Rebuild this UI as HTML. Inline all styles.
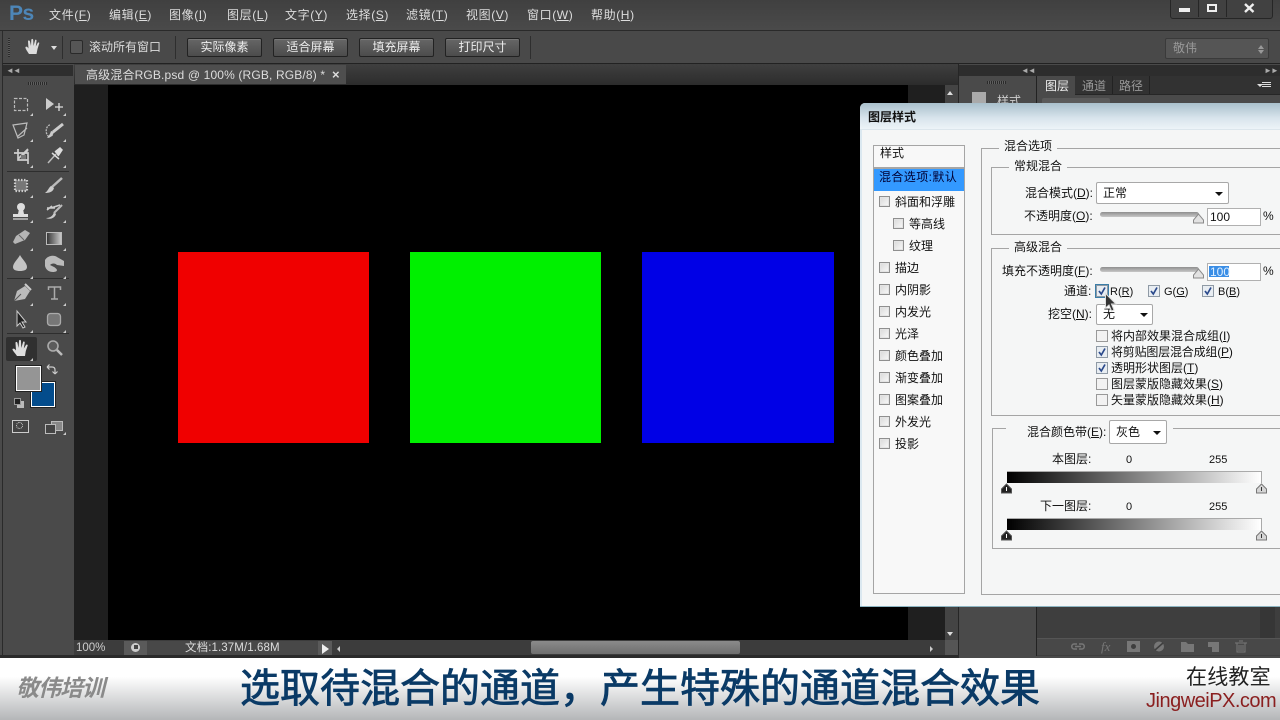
<!DOCTYPE html>
<html><head><meta charset="utf-8"><style>
html,body{margin:0;padding:0;background:#000}
#r{position:relative;width:1280px;height:720px;overflow:hidden;background:#434343;font-family:"Liberation Sans","WenQuanYi Zen Hei","Noto Sans CJK SC",sans-serif;font-size:12px;color:#ddd}
.a{position:absolute}
.t{position:absolute;white-space:nowrap;line-height:14px}
.m{letter-spacing:.6px}
u{text-decoration:underline}
.d{color:#111}
.btn{position:absolute;top:38px;height:17px;line-height:17px;text-align:center;border:1px solid #222;border-radius:2px;background:linear-gradient(#666,#4c4c4c);color:#eee;box-shadow:inset 0 1px 0 #777}
.cb{position:absolute;width:9px;height:9px;border:1px solid #8f8f8f;background:linear-gradient(135deg,#d8d8d8,#fafafa);box-shadow:inset 0 0 0 1px #e4e4e4}
.gb{position:absolute;border:1px solid #a5a5a5}
.lg{position:absolute;background:#f5f6f6;padding:0 5px;color:#111;line-height:14px;white-space:nowrap}
.sel{position:absolute;background:#fff;border:1px solid #a8a8a8;border-radius:2px;color:#111}
.grad{position:absolute;left:1007px;width:254px;height:11px;background:linear-gradient(90deg,#000,#fff);border:1px solid #aaa;border-left:0;border-bottom:0}
.tri{position:absolute;width:0;height:0;border-left:4px solid transparent;border-right:4px solid transparent;border-top:4px solid #111}
svg{position:absolute;overflow:visible}
</style></head><body><div id="r">

<!-- menu bar -->
<div class="a" style="left:0;top:0;width:1280px;height:30px;background:linear-gradient(#404040,#4a4a4a)"></div>
<div class="a" style="left:0;top:30px;width:1280px;height:1px;background:#2a2a2a"></div>
<div class="t" style="left:9px;top:2px;font-size:21px;line-height:24px;font-weight:bold;color:#4d86b8;letter-spacing:-.5px">Ps</div>
<div class="t m" style="left:49px;top:8px">文件(<u>F</u>)</div>
<div class="t m" style="left:109px;top:8px">编辑(<u>E</u>)</div>
<div class="t m" style="left:169px;top:8px">图像(<u>I</u>)</div>
<div class="t m" style="left:227px;top:8px">图层(<u>L</u>)</div>
<div class="t m" style="left:285px;top:8px">文字(<u>Y</u>)</div>
<div class="t m" style="left:346px;top:8px">选择(<u>S</u>)</div>
<div class="t m" style="left:406px;top:8px">滤镜(<u>T</u>)</div>
<div class="t m" style="left:466px;top:8px">视图(<u>V</u>)</div>
<div class="t m" style="left:527px;top:8px">窗口(<u>W</u>)</div>
<div class="t m" style="left:591px;top:8px">帮助(<u>H</u>)</div>
<!-- window controls -->
<div class="a" style="left:1170px;top:-2px;width:101px;height:19px;background:#414141;border:1px solid #262626;border-radius:0 0 3px 3px"></div>
<div class="a" style="left:1198px;top:0;width:1px;height:17px;background:#262626"></div>
<div class="a" style="left:1226px;top:0;width:1px;height:17px;background:#262626"></div>
<div class="a" style="left:1179px;top:8px;width:11px;height:4px;background:#eee"></div>
<div class="a" style="left:1207px;top:4px;width:6px;height:4px;border:2px solid #eee"></div>
<svg style="left:1244px;top:3px" width="11" height="10"><path d="M1 1L9.500 9M9.500 1L1 9" stroke="#eee" stroke-width="2.400" fill="none"/></svg>

<!-- options bar -->
<div class="a" style="left:0;top:31px;width:1280px;height:33px;background:#494949"></div>
<div class="a" style="left:2px;top:31px;width:1278px;height:32px;border-left:1px solid #2c2c2c;border-bottom:1px solid #222"></div>
<div class="a" style="left:8px;top:38px;width:2px;height:19px;background:repeating-linear-gradient(#2b2b2b 0 1px,#5a5a5a 1px 2px)"></div>
<svg style="left:24px;top:38px" width="18" height="18"><path d="M5 16C3 13 1 10 1.500 9C2.500 8 3.500 9 4.500 10.500L4 3.500C4 2 5.500 2 6 3.500L7 8L7.300 2C7.500 .5 9 .5 9.200 2L9.500 8L11 2.500C11.400 1.200 12.700 1.500 12.500 3L11.800 8.500L13.800 4.800C14.600 3.800 15.600 4.500 15.200 5.500L13.500 11L12.500 16Z" fill="#ddd"/></svg>
<div class="tri" style="left:51px;top:46px;border-left-width:3px;border-right-width:3px;border-top-color:#ddd"></div>
<div class="a" style="left:62px;top:36px;width:1px;height:23px;background:#2e2e2e"></div>
<div class="a" style="left:70px;top:40px;width:11px;height:12px;background:#565656;border:1px solid #2a2a2a;border-radius:2px"></div>
<div class="t" style="left:89px;top:40px">滚动所有窗口</div>
<div class="a" style="left:175px;top:36px;width:1px;height:23px;background:#2e2e2e"></div>
<div class="btn" style="left:187px;width:73px">实际像素</div>
<div class="btn" style="left:273px;width:73px">适合屏幕</div>
<div class="btn" style="left:359px;width:73px">填充屏幕</div>
<div class="btn" style="left:445px;width:73px">打印尺寸</div>
<div class="a" style="left:530px;top:36px;width:1px;height:23px;background:#2e2e2e"></div>
<div class="a" style="left:1165px;top:38px;width:102px;height:19px;background:#555;border:1px solid #3a3a3a;border-radius:2px"></div>
<div class="t" style="left:1173px;top:41px;color:#999">敬伟</div>
<div class="tri" style="left:1258px;top:50px;border-left-width:3px;border-right-width:3px;border-top-color:#999"></div>
<div class="tri" style="left:1258px;top:45px;border-left-width:3px;border-right-width:3px;border-top:0;border-bottom:4px solid #999"></div>

<!-- left tool panel -->
<div class="a" style="left:0;top:64px;width:74px;height:592px;background:#4a4a4a"></div>
<div class="a" style="left:2px;top:64px;width:71px;height:591px;border:1px solid #2a2a2a;border-top:0"></div>
<div class="a" style="left:3px;top:65px;width:70px;height:11px;background:#2e2e2e"></div>
<div class="t" style="left:6px;top:64px;font-size:8px;color:#aaa;letter-spacing:-1px">◄◄</div>
<div class="a" style="left:28px;top:82px;width:19px;height:3px;background:repeating-linear-gradient(90deg,#2a2a2a 0 1px,#5e5e5e 1px 2px)"></div>

<svg style="left:0;top:85px" width="74" height="360" fill="none" stroke="#bbb">
<rect x="14.500" y="13.500" width="13" height="12" stroke-dasharray="3 1.500" stroke-width="1.200"/>
<path d="M46 13L46 25L54 19Z" fill="#ccc" stroke="none"/><path d="M59 18V26M55 22H63" stroke="#ddd" stroke-width="1.300"/>
<path d="M13 40L27 38L24 50L18 53ZM17 52L27 43" stroke-width="1.200"/>
<path d="M50 40C46 40 44 50 50 52M48 52L53 50" stroke-dasharray="2 1" stroke-width="1.300"/><path d="M53 47L63 39" stroke="#ccc" stroke-width="3"/><path d="M47 53C50 53 53 51 54 47L51 46C50 49 49 51 47 53Z" fill="#ccc" stroke="none"/>
<path d="M18 64V75H28V68H14M21 72L28 65M28 64L18 74M28 75V79" stroke-width="1.700" stroke="#ccc"/><rect x="21" y="70" width="5" height="4" fill="#777" stroke="none"/>
<path d="M48 78L56 69" stroke-width="1.500"/><path d="M52 68L59 74M55 67L60 63L62 65L58 71" fill="#ddd" stroke="#ddd" stroke-width="1.500"/>
<path d="M7 86.500H69" stroke="#2e2e2e"/>
<rect x="15" y="95" width="12" height="11" fill="#777" stroke="#ccc" stroke-dasharray="1.500 1.500" stroke-width="2.200"/>
<path d="M52 102L62 93" stroke="#bbb" stroke-width="2.500"/><path d="M45 108C49 108 53 107 54 103L51 101C49 102 48 106 45 108Z" fill="#ccc" stroke="none"/>
<circle cx="21" cy="122" r="4" fill="#ddd" stroke="none"/><path d="M19 124H23L24 129H18ZM13 129H28V132H13Z" fill="#ddd" stroke="none"/><path d="M13 134H28" stroke="#ddd" stroke-width="1.200"/>
<path d="M47 123H55M60 120L51 123M47 125L52 121" stroke="#ccc" stroke-width="1.500"/><path d="M46 133C50 133 53 131 54 127L56 129C55 133 50 135 46 133Z" fill="#ccc" stroke="none"/><path d="M54 128L62 120" stroke="#bbb" stroke-width="2"/>
<path d="M13 157L16 151L25 145L30 148L25 155L15 159Z" fill="#b5b5b5" stroke="none"/><path d="M19 150L24 155" stroke="#666"/>
<defs><linearGradient id="g1"><stop offset="0" stop-color="#333"/><stop offset="1" stop-color="#ccc"/></linearGradient></defs>
<rect x="46.500" y="147.500" width="15" height="12" fill="url(#g1)" stroke="#bbb"/>
</svg>

<svg style="left:0;top:250px" width="74" height="200" fill="none" stroke="#bbb">
<path d="M13 17C13 13 18 9 20 5C22 9 27 13 27 17C27 20 24 21 20 21C16 21 13 20 13 17Z" fill="#c4c4c4" stroke="none"/>
<path d="M45 10C48 5 55 5 57 7L64 11V16L57 15C55 13 52 13 50 15L54 17C59 20 57 22 53 22C49 22 46 20 45 16Z" fill="#bbb" stroke="none"/>
<path d="M7 28.500H69" stroke="#2e2e2e"/>
<path d="M14 51L17 41L25 36L30 41L25 49Z" fill="#bbb" stroke="none"/><path d="M14 51L21 44" stroke="#555"/><path d="M25 34L31 40" stroke="#ccc" stroke-width="2"/>
<path d="M48.500 40V37H60.500V40M54.500 37V49M51 49H58" stroke="#aaa" stroke-width="1.500"/>
<path d="M17 61V76L20 73L23 78L25 77L22 72H26Z" fill="#222" stroke="#ccc"/>
<rect x="47.500" y="63.500" width="13" height="12" rx="3" fill="#777" stroke="#aaa" stroke-width="1.300"/>
</svg>
<div class="a" style="left:7px;top:333px;width:62px;height:1px;background:#2e2e2e"></div>
<div class="a" style="left:6px;top:337px;width:31px;height:24px;background:#303030;border-radius:2px"></div>
<svg style="left:11px;top:339px" width="20" height="19"><path d="M6 17C4 14 1 11 1.500 10C2.500 9 4 10 5 11.500L4.500 4C4.500 2.500 6 2.500 6.500 4L7.500 9L8 2C8.200 .5 9.800 .5 10 2L10.300 9L12 3.200C12.400 2 14 2.300 13.700 3.700L12.800 9.500L15 6C15.800 5 17 5.700 16.600 6.800L14.800 12L14 17Z" fill="#ddd"/></svg>
<svg style="left:46px;top:339px" width="18" height="18" fill="none"><circle cx="7" cy="7" r="5" stroke="#aaa" stroke-width="1.600" fill="#5c5c5c"/><path d="M11 11L16 16" stroke="#bbb" stroke-width="2.500"/></svg>
<!-- triangles on tools -->
<svg style="left:0;top:85px" width="74" height="360" fill="#ccc">
<path d="M33 31h-3l3-3zM66 31h-3l3-3zM33 57h-3l3-3zM66 57h-3l3-3zM33 83h-3l3-3zM66 83h-3l3-3zM33 113h-3l3-3zM66 113h-3l3-3zM33 138h-3l3-3zM66 138h-3l3-3zM33 166h-3l3-3zM66 166h-3l3-3zM33 194h-3l3-3zM66 194h-3l3-3zM33 221h-3l3-3zM66 221h-3l3-3zM33 248h-3l3-3zM66 248h-3l3-3zM33 276h-3l3-3zM66 350h-3l3-3z"/>
</svg>
<!-- colour swatches -->
<div class="a" style="left:31px;top:382px;width:22px;height:23px;background:#034c8c;border:1px solid #fff;outline:1px solid #222"></div>
<div class="a" style="left:16px;top:366px;width:23px;height:23px;background:#959595;border:1px solid #fff;outline:1px solid #222"></div>
<svg style="left:46px;top:363px" width="12" height="13" fill="none" stroke="#ccc" stroke-width="1.200"><path d="M1 4H6C8 4 9 5 9 7V11M1 4L3.500 1.500M1 4L3.500 6.500M9 11L6.500 8.500M9 11L11.500 8.500"/></svg>
<div class="a" style="left:17px;top:401px;width:7px;height:7px;background:#bbb"></div>
<div class="a" style="left:14px;top:398px;width:5px;height:5px;background:#222;border:1px solid #999"></div>
<div class="a" style="left:12px;top:420px;width:15px;height:11px;border:1px solid #ccc;background:#444"></div>
<div class="a" style="left:16px;top:422px;width:5px;height:5px;border:1px dotted #ddd;border-radius:50%"></div>
<div class="a" style="left:51px;top:421px;width:10px;height:8px;background:#888;border:1px solid #bbb"></div>
<div class="a" style="left:45px;top:424px;width:9px;height:8px;background:#444;border:1px solid #bbb"></div>

<!-- doc area -->
<div class="a" style="left:74px;top:64px;width:884px;height:21px;background:linear-gradient(#3f3f3f,#2c2c2c)"></div>
<div class="a" style="left:75px;top:65px;width:271px;height:19px;background:#4e4e4e"></div>
<div class="t" style="left:86px;top:68px;color:#ddd;letter-spacing:.15px">高级混合RGB.psd @ 100% (RGB, RGB/8) *</div>
<div class="t" style="left:332px;top:68px;color:#ddd;font-size:13px;font-weight:bold">×</div>
<div class="a" style="left:74px;top:85px;width:34px;height:555px;background:#1f1f1f"></div>
<div class="a" style="left:108px;top:85px;width:800px;height:555px;background:#000"></div>
<div class="a" style="left:908px;top:85px;width:37px;height:555px;background:#1f1f1f"></div>
<div class="a" style="left:945px;top:85px;width:13px;height:555px;background:#444"></div>
<div class="a" style="left:958px;top:64px;width:1px;height:592px;background:#262626"></div>
<div class="tri" style="left:947px;top:91px;border-left-width:3px;border-right-width:3px;border-top:0;border-bottom:4px solid #ddd"></div>
<div class="tri" style="left:947px;top:632px;border-left-width:3px;border-right-width:3px;border-top-color:#ddd"></div>
<div class="a" style="left:178px;top:252px;width:191px;height:191px;background:#f00000"></div>
<div class="a" style="left:410px;top:252px;width:191px;height:191px;background:#00f000"></div>
<div class="a" style="left:642px;top:252px;width:192px;height:191px;background:#0000e6"></div>

<!-- status bar -->
<div class="a" style="left:74px;top:640px;width:884px;height:15px;background:#3c3c3c"></div>
<div class="a" style="left:0;top:655px;width:1280px;height:3px;background:#2a2a2a"></div>
<div class="t" style="left:76px;top:641px;color:#ccc;font-size:11.500px">100%</div>
<div class="a" style="left:124px;top:641px;width:23px;height:14px;background:#5a5a5a"></div>
<div class="a" style="left:131px;top:643px;width:9px;height:9px;border-radius:50%;background:#ccc"></div>
<div class="a" style="left:134px;top:645px;width:4px;height:4px;background:#444"></div>
<div class="a" style="left:147px;top:641px;width:171px;height:14px;background:#484848"></div>
<div class="t" style="left:185px;top:641px;color:#ddd;font-size:11.500px;letter-spacing:.1px">文档:1.37M/1.68M</div>
<div class="a" style="left:318px;top:641px;width:14px;height:14px;background:#5a5a5a"></div>
<div class="a" style="left:322px;top:644px;width:0;height:0;border-top:5px solid transparent;border-bottom:5px solid transparent;border-left:7px solid #eee"></div>
<div class="a" style="left:337px;top:646px;width:0;height:0;border-top:3px solid transparent;border-bottom:3px solid transparent;border-right:3px solid #ccc"></div>
<div class="a" style="left:531px;top:641px;width:209px;height:13px;border-radius:2px;background:linear-gradient(#8a8a8a,#6f6f6f)"></div>
<div class="a" style="left:930px;top:646px;width:0;height:0;border-top:3px solid transparent;border-bottom:3px solid transparent;border-left:3px solid #ccc"></div>
<div class="a" style="left:945px;top:640px;width:13px;height:15px;background:#555"></div>

<!-- right panels -->
<div class="a" style="left:959px;top:64px;width:321px;height:594px;background:#4a4a4a"></div>
<div class="a" style="left:959px;top:65px;width:321px;height:11px;background:#2d2d2d"></div>
<div class="t" style="left:1021px;top:64px;font-size:8px;color:#aaa;letter-spacing:-1px">◄◄</div>
<div class="t" style="left:1264px;top:64px;font-size:8px;color:#aaa;letter-spacing:-1px">►►</div>
<div class="a" style="left:987px;top:81px;width:19px;height:3px;background:repeating-linear-gradient(90deg,#2a2a2a 0 1px,#5e5e5e 1px 2px)"></div>
<div class="a" style="left:1036px;top:76px;width:244px;height:580px;background:#3e3e3e;border-left:1px solid #222"></div>
<div class="a" style="left:1037px;top:76px;width:243px;height:18px;background:#323232"></div>
<div class="a" style="left:1037px;top:94px;width:243px;height:12px;background:#4a4a4a;border-top:1px solid #262626"></div>
<div class="a" style="left:1037px;top:76px;width:38px;height:19px;background:#4a4a4a"></div>
<div class="a" style="left:1112px;top:76px;width:1px;height:18px;background:#222"></div>
<div class="a" style="left:1149px;top:76px;width:1px;height:18px;background:#222"></div>
<div class="t" style="left:1045px;top:79px;color:#eee">图层</div>
<div class="t" style="left:1082px;top:79px;color:#999">通道</div>
<div class="t" style="left:1119px;top:79px;color:#999">路径</div>
<div class="a" style="left:1042px;top:98px;width:68px;height:8px;background:#5a5a5a;border-radius:2px"></div>
<div class="a" style="left:1262px;top:82px;width:9px;height:6px;background:repeating-linear-gradient(#ddd 0 1px,#323232 1px 2px)"></div>
<div class="tri" style="left:1257px;top:84px;border-left-width:3px;border-right-width:3px;border-top:3px solid #ddd"></div>
<div class="a" style="left:972px;top:92px;width:14px;height:11px;background:#aaa"></div>
<div class="t" style="left:997px;top:94px;color:#ccc">样式</div>
<div class="a" style="left:1037px;top:638px;width:243px;height:1px;background:#555"></div>
<div class="a" style="left:1037px;top:639px;width:243px;height:16px;background:#484848"></div>
<div class="a" style="left:1260px;top:607px;width:15px;height:31px;background:#363636"></div>
<svg style="left:1071px;top:640px" width="185" height="14" fill="none" stroke="#777" stroke-width="1.500">
<path d="M6 4H3C0 4 0 9 3 9H6M8 4H11C14 4 14 9 11 9H8M4 6.500H10"/>
<text x="30" y="11" font-family="Liberation Serif" font-style="italic" font-size="13" fill="#777" stroke="none">fx</text>
<rect x="56" y="1" width="13" height="11" fill="#777" stroke="none"/><circle cx="62.500" cy="6.500" r="2.500" fill="#3e3e3e" stroke="none"/>
<circle cx="88" cy="6.500" r="5" fill="#777" stroke="none"/><path d="M84 10L92 3" stroke="#3e3e3e"/>
<path d="M110 2H115L117 4H123V12H110Z" fill="#777" stroke="none"/>
<path d="M137 2H148V12H141V7H137Z" fill="#777" stroke="none"/>
<path d="M164 3H176M166 3V12H174V3M168 1H172M168 5V11M170 5V11M172 5V11" stroke-width="1"/>
</svg>

<!-- dialog -->
<div class="a" style="left:860px;top:103px;width:420px;height:503px;background:#f5f6f6;border-radius:5px 0 0 0"></div>
<div class="a" style="left:860px;top:606px;width:420px;height:1px;background:#8db5c2"></div>
<div class="a" style="left:860px;top:130px;width:2px;height:476px;background:#dbe8f0"></div>
<div class="a" style="left:860px;top:103px;width:420px;height:27px;border-radius:5px 0 0 0;background:linear-gradient(#a9c0cc,#d8e4ec 55%,#eff5f9)"></div>
<div class="a" style="left:860px;top:129px;width:420px;height:1px;background:#dce6ec"></div>
<div class="t" style="left:868px;top:110px;color:#111;font-weight:bold;font-size:12px">图层样式</div>

<!-- style list -->
<div class="a" style="left:873px;top:145px;width:90px;height:447px;background:#f8f8f8;border:1px solid #a5a5a5"></div>
<div class="a" style="left:874px;top:167px;width:90px;height:2px;background:#a5a5a5"></div>
<div class="a" style="left:874px;top:169px;width:90px;height:22px;background:#3399ff"></div>
<div class="t d" style="left:880px;top:146px">样式</div>
<div class="t" style="left:879px;top:170px;color:#003;letter-spacing:.4px">混合选项:默认</div>
<div class="cb" style="left:879px;top:196px"></div><div class="t d" style="left:895px;top:195px">斜面和浮雕</div>
<div class="cb" style="left:893px;top:218px"></div><div class="t d" style="left:909px;top:217px">等高线</div>
<div class="cb" style="left:893px;top:240px"></div><div class="t d" style="left:909px;top:239px">纹理</div>
<div class="cb" style="left:879px;top:262px"></div><div class="t d" style="left:895px;top:261px">描边</div>
<div class="cb" style="left:879px;top:284px"></div><div class="t d" style="left:895px;top:283px">内阴影</div>
<div class="cb" style="left:879px;top:306px"></div><div class="t d" style="left:895px;top:305px">内发光</div>
<div class="cb" style="left:879px;top:328px"></div><div class="t d" style="left:895px;top:327px">光泽</div>
<div class="cb" style="left:879px;top:350px"></div><div class="t d" style="left:895px;top:349px">颜色叠加</div>
<div class="cb" style="left:879px;top:372px"></div><div class="t d" style="left:895px;top:371px">渐变叠加</div>
<div class="cb" style="left:879px;top:394px"></div><div class="t d" style="left:895px;top:393px">图案叠加</div>
<div class="cb" style="left:879px;top:416px"></div><div class="t d" style="left:895px;top:415px">外发光</div>
<div class="cb" style="left:879px;top:438px"></div><div class="t d" style="left:895px;top:437px">投影</div>

<!-- group boxes -->
<div class="gb" style="left:981px;top:148px;width:310px;height:445px"></div>
<div class="lg" style="left:999px;top:139px">混合选项</div>
<div class="gb" style="left:991px;top:167px;width:300px;height:66px"></div>
<div class="lg" style="left:1009px;top:159px">常规混合</div>
<div class="t d" style="left:1025px;top:186px">混合模式(<u>D</u>):</div>
<div class="sel" style="left:1096px;top:182px;width:131px;height:20px"></div>
<div class="t d" style="left:1103px;top:186px">正常</div>
<div class="tri" style="left:1215px;top:192px"></div>
<div class="t d" style="left:1024px;top:209px">不透明度(<u>O</u>):</div>
<div class="a" style="left:1100px;top:212px;width:99px;height:5px;border-radius:3px;background:linear-gradient(#8e8e8e,#c8c8c8)"></div>
<svg style="left:1193px;top:213px" width="11" height="11"><path d="M.5 10V7L5.500 1L10.500 7V10Z" fill="#e2e2e2" stroke="#8a8a8a"/></svg>
<div class="a" style="left:1207px;top:208px;width:52px;height:16px;background:#fff;border:1px solid #b0b0b0"></div>
<div class="t d" style="left:1210px;top:210px">100</div>
<div class="t d" style="left:1263px;top:209px">%</div>

<div class="gb" style="left:991px;top:248px;width:300px;height:166px"></div>
<div class="lg" style="left:1009px;top:240px">高级混合</div>
<div class="t d" style="left:1002px;top:264px">填充不透明度(<u>F</u>):</div>
<div class="a" style="left:1100px;top:267px;width:99px;height:5px;border-radius:3px;background:linear-gradient(#8e8e8e,#c8c8c8)"></div>
<svg style="left:1193px;top:268px" width="11" height="11"><path d="M.5 10V7L5.500 1L10.500 7V10Z" fill="#e2e2e2" stroke="#8a8a8a"/></svg>
<div class="a" style="left:1207px;top:263px;width:52px;height:16px;background:#fff;border:1px solid #b0b0b0"></div>
<div class="a" style="left:1209px;top:266px;width:20px;height:11px;background:#3a8ee6"></div>
<div class="t" style="left:1210px;top:265px;color:#dfefff">100</div>
<div class="t d" style="left:1263px;top:264px">%</div>

<div class="t d" style="left:1064px;top:284px">通道:</div>
<svg width="0" height="0"><defs><g id="ck"><rect x=".5" y=".5" width="11" height="11" fill="#e8edf2" stroke="#8f9aa5"/><path d="M3 6L5.300 9L9 2.500" fill="none" stroke="#2b4a8c" stroke-width="1.700"/></g><g id="un"><rect x=".5" y=".5" width="11" height="11" fill="#f2f2f2" stroke="#999"/></g></defs></svg>
<svg style="left:1096px;top:285px" width="12" height="12"><use href="#ck"/></svg>
<div class="a" style="left:1095px;top:284px;width:12px;height:12px;border:1px solid #3b7ea8"></div>
<div class="t d" style="left:1110px;top:285px;font-size:11px">R(<u>R</u>)</div>
<svg style="left:1148px;top:285px" width="12" height="12"><use href="#ck"/></svg>
<div class="t d" style="left:1164px;top:285px;font-size:11px">G(<u>G</u>)</div>
<svg style="left:1202px;top:285px" width="12" height="12"><use href="#ck"/></svg>
<div class="t d" style="left:1218px;top:285px;font-size:11px">B(<u>B</u>)</div>

<div class="t d" style="left:1048px;top:307px">挖空(<u>N</u>):</div>
<div class="sel" style="left:1096px;top:304px;width:55px;height:19px"></div>
<div class="t d" style="left:1103px;top:307px">无</div>
<div class="tri" style="left:1140px;top:313px"></div>

<svg style="left:1096px;top:330px" width="12" height="12"><use href="#un"/></svg><div class="t d" style="left:1111px;top:329px">将内部效果混合成组(<u>I</u>)</div>
<svg style="left:1096px;top:346px" width="12" height="12"><use href="#ck"/></svg><div class="t d" style="left:1111px;top:345px;letter-spacing:-.2px">将剪贴图层混合成组(<u>P</u>)</div>
<svg style="left:1096px;top:362px" width="12" height="12"><use href="#ck"/></svg><div class="t d" style="left:1111px;top:361px">透明形状图层(<u>T</u>)</div>
<svg style="left:1096px;top:378px" width="12" height="12"><use href="#un"/></svg><div class="t d" style="left:1111px;top:377px">图层蒙版隐藏效果(<u>S</u>)</div>
<svg style="left:1096px;top:394px" width="12" height="12"><use href="#un"/></svg><div class="t d" style="left:1111px;top:393px">矢量蒙版隐藏效果(<u>H</u>)</div>

<div class="gb" style="left:992px;top:428px;width:300px;height:119px"></div>
<div class="a" style="left:1006px;top:422px;width:167px;height:20px;background:#f5f6f6"></div>
<div class="t d" style="left:1027px;top:425px">混合颜色带(<u>E</u>):</div>
<div class="sel" style="left:1109px;top:420px;width:56px;height:22px"></div>
<div class="t d" style="left:1116px;top:425px">灰色</div>
<div class="tri" style="left:1153px;top:431px"></div>
<div class="t d" style="left:1052px;top:452px">本图层:</div>
<div class="t d" style="left:1126px;top:453px;font-size:11px">0</div>
<div class="t d" style="left:1209px;top:453px;font-size:11px">255</div>
<div class="grad" style="top:471px"></div>
<svg style="left:1001px;top:483px" width="12" height="11"><path d="M.5 10V6L5.500 1L10.500 6V10Z" fill="#222" stroke="#555"/><path d="M5.500 4V8" stroke="#fff"/></svg>
<svg style="left:1256px;top:483px" width="12" height="11"><path d="M.5 10V6L5.500 1L10.500 6V10Z" fill="#d5d5d5" stroke="#777"/><path d="M5.500 4V8" stroke="#333"/></svg>
<div class="t d" style="left:1040px;top:499px">下一图层:</div>
<div class="t d" style="left:1126px;top:500px;font-size:11px">0</div>
<div class="t d" style="left:1209px;top:500px;font-size:11px">255</div>
<div class="grad" style="top:518px"></div>
<svg style="left:1001px;top:530px" width="12" height="11"><path d="M.5 10V6L5.500 1L10.500 6V10Z" fill="#222" stroke="#555"/><path d="M5.500 4V8" stroke="#fff"/></svg>
<svg style="left:1256px;top:530px" width="12" height="11"><path d="M.5 10V6L5.500 1L10.500 6V10Z" fill="#d5d5d5" stroke="#777"/><path d="M5.500 4V8" stroke="#333"/></svg>

<!-- cursor -->
<svg style="left:1105px;top:293px" width="12" height="20"><path d="M.5 .5V15L4 12L6.500 18L9 17L6.500 11H11Z" fill="#333" stroke="#ddd"/></svg>

<!-- bottom banner -->
<div class="a" style="left:0;top:658px;width:1280px;height:62px;background:linear-gradient(#fff 0,#fff 30%,#b4b6b8 100%)"></div>
<div class="t" style="left:16px;top:675px;font-size:23px;line-height:26px;font-weight:bold;font-style:italic;color:#8a8a8a;letter-spacing:-1px">敬伟培训</div>
<div class="t" style="left:240px;top:665px;font-size:40px;line-height:48px;color:#0a3a66;font-family:'Liberation Sans','Noto Sans CJK SC',sans-serif;-webkit-text-stroke:.8px #0a3a66">选取待混合的通道，产生特殊的通道混合效果</div>
<div class="t" style="left:1186px;top:667px;font-size:21px;line-height:22px;color:#222;letter-spacing:.2px">在线教室</div>
<div class="t" style="left:1146px;top:689px;font-size:20px;line-height:24px;color:#8a1f1f;letter-spacing:-.5px">JingweiPX.com</div>

</div></body></html>
